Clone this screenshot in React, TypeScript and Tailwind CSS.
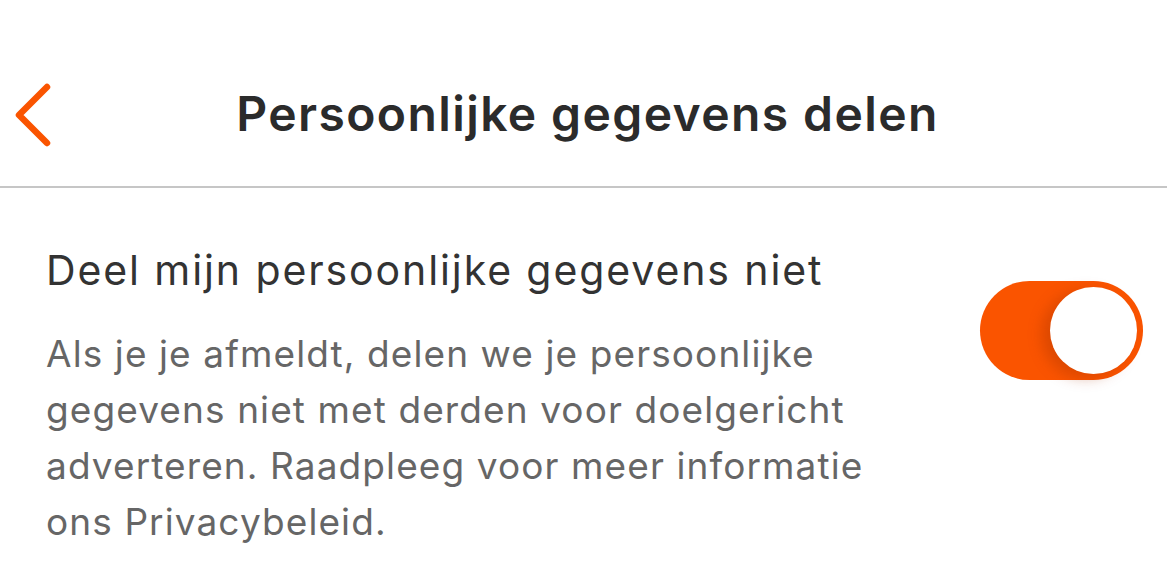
import React from "react";

function BackChevron() {
  return (
    <svg width="42" height="64" viewBox="0 0 42 64" fill="none">
      <path d="M35 4L7 32l28 28" stroke="#fa5400" strokeWidth="6.5" strokeLinecap="round" strokeLinejoin="round" />
    </svg>
  );
}

function Toggle({ on }: { on: boolean }) {
  return (
    <div className="relative w-[163px] h-[99px] rounded-full bg-[#fa5400] shrink-0">
      <div
        className={
          "absolute top-[6px] w-[87px] h-[87px] rounded-full bg-white shadow-[-8px_4px_14px_rgba(160,50,0,0.35)] " +
          (on ? "right-[6px]" : "left-[6px]")
        }
      />
    </div>
  );
}

export default function App() {
  return (
    <div className="w-[1167px] h-[561px] bg-white overflow-hidden font-['Inter','Noto_Sans',sans-serif]">
      <header className="relative h-[188px] flex items-start justify-center pt-[85px] pl-[8px] border-b-2 border-[#c6c6c6]">
        <button className="absolute left-[12px] top-[83px]">
          <BackChevron />
        </button>
        <h1 className="text-[48px] leading-[58px] font-semibold text-[#2b2b2b] tracking-[1.4px]">
          Persoonlijke gegevens delen
        </h1>
      </header>
      <section className="flex items-start justify-between pl-[46px] pr-[24px] pt-[56px]">
        <div>
          <h2 className="text-[41px] leading-[52px] text-[#333333] tracking-[1.9px]">
            Deel mijn persoonlijke gegevens niet
          </h2>
          <p className="mt-[30px] text-[37px] leading-[56px] text-[#666666] tracking-[1.1px]">
            Als je je afmeldt, delen we je persoonlijke
            <br />
            gegevens niet met derden voor doelgericht
            <br />
            adverteren. Raadpleeg voor meer informatie
            <br />
            ons Privacybeleid.
          </p>
        </div>
        <div className="pt-[37px]">
          <Toggle on />
        </div>
      </section>
    </div>
  );
}
